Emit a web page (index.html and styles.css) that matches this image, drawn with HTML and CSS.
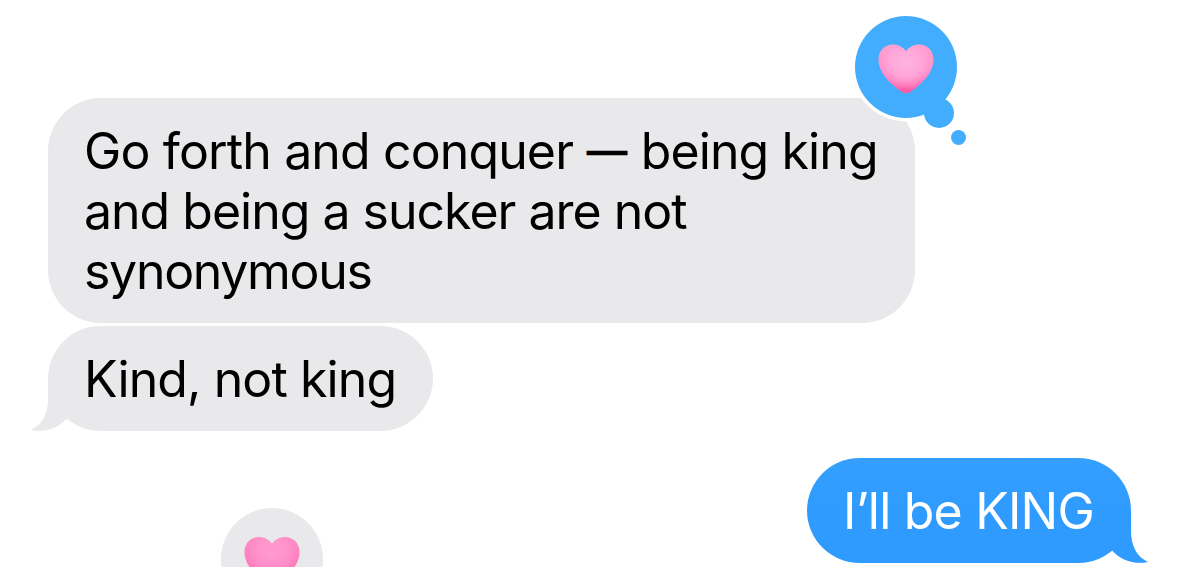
FILE: index.html
```html
<!DOCTYPE html>
<html lang="en">
<head>
<meta charset="utf-8">
<title>Messages</title>
<link rel="stylesheet" href="styles.css">
</head>
<body>
<svg class="defs" aria-hidden="true">
  <defs>
    <linearGradient id="heart-fill" x1="0" y1="0" x2="0" y2="1">
      <stop offset="0" stop-color="#ff9fce"/>
      <stop offset=".5" stop-color="#ff8dc8"/>
      <stop offset=".8" stop-color="#ff72b6"/>
      <stop offset="1" stop-color="#ff559f"/>
    </linearGradient>
    <linearGradient id="heart-fill-deep" x1="0" y1="0" x2="0" y2="1">
      <stop offset="0" stop-color="#ff8cc4"/>
      <stop offset=".6" stop-color="#ff74b9"/>
      <stop offset="1" stop-color="#ff559f"/>
    </linearGradient>
    <radialGradient id="heart-glow" cx=".5" cy=".38" r=".54">
      <stop offset="0" stop-color="#ffb4e0"/>
      <stop offset=".55" stop-color="#ffaadb" stop-opacity=".85"/>
      <stop offset="1" stop-color="#ff9fd4" stop-opacity="0"/>
    </radialGradient>
    <path id="heart" d="M28 7.300C25 3.200 20.500.400 15 .400C6.500.400.500 6.800.500 15.500C.500 28 11 39.500 24 48C27 49.900 29 49.900 32 48C45 39.500 55.500 28 55.500 15.500C55.500 6.800 49.500.400 41 .400C35.500.400 31 3.200 28 7.300Z"/>
  </defs>
</svg>
<main class="thread">
  <section class="message received">
    <p class="bubble long">
      <span class="line l1">Go forth and conquer <span class="dash">—</span> being king</span>
      <span class="line l2">and being a sucker are not</span>
      <span class="line l3">synonymous</span>
    </p>
    <svg class="tapback" width="120" height="140" viewBox="0 0 120 140" role="img" aria-label="Heart">
      <circle cx="58" cy="58" r="54.500" fill="#fff"/>
      <g fill="#42adfc">
        <circle cx="58" cy="58" r="51"/>
        <circle cx="91" cy="104" r="15"/>
        <circle cx="110.500" cy="128.500" r="7.500"/>
      </g>
      <g transform="translate(30 35)">
        <use href="#heart" fill="url(#heart-fill)"/>
        <use href="#heart" fill="url(#heart-glow)"/>
      </g>
    </svg>
  </section>
  <section class="message received">
    <p class="bubble short"><span class="line l4">Kind, not king</span></p>
    <svg class="tail left" width="46" height="54" viewBox="0 0 46 54"><path d="M17 0V22C17 37 11 48 0 53C14 56 27 51 35.500 42L46 24V0Z"/></svg>
  </section>
  <section class="message sent">
    <p class="bubble short"><span class="line l5">I’ll be KING</span></p>
    <svg class="tail right" width="46" height="54" viewBox="0 0 46 54"><path d="M29 0V22C29 37 35 48 46 53C32 56 19 51 10.500 42L0 24V0Z"/></svg>
    <svg class="tapback-next" width="102" height="59" viewBox="0 0 102 59" role="img" aria-label="Heart">
      <circle cx="51" cy="51" r="51" fill="#e9e9eb"/>
      <g transform="translate(23 28.500)">
        <use href="#heart" fill="url(#heart-fill-deep)"/>
        <use href="#heart" fill="url(#heart-glow)" opacity=".5"/>
      </g>
    </svg>
  </section>
</main>
</body>
</html>
```

FILE: styles.css
```css
html, body {
  margin: 0;
  background: #fff;
}

.defs {
  position: absolute;
  width: 0;
  height: 0;
}

.thread {
  box-sizing: border-box;
  width: 1179px;
  height: 567px;
  padding: 98px 48px 0;
  display: flex;
  flex-direction: column;
  gap: 3px;
  overflow: hidden;
  font: 400 50px/60px Inter, "Liberation Sans", sans-serif;
}

.message {
  position: relative;
  display: flex;
}

.bubble {
  box-sizing: border-box;
  margin: 0;
  border-radius: 53px;
  padding: 23px 36px 22px;
}

.received .bubble {
  background: #e9e9eb;
  color: #000;
}

.long {
  width: 867px;
  height: 225px;
}

.short {
  width: 385px;
  height: 105px;
}

.sent {
  justify-content: flex-end;
  margin-top: 24px;
}

.sent .bubble {
  width: 324px;
  background: linear-gradient(#349ffd, #2f9bfe 50%);
  color: #fff;
}

.line {
  display: block;
  white-space: nowrap;
}

.l1 { letter-spacing: -0.87px; }
.l2 { letter-spacing: -1px; }
.l3 { letter-spacing: -1.3px; }
.l4 { letter-spacing: -0.9px; }
.l5 { letter-spacing: -0.8px; }

.dash {
  display: inline-block;
  margin: 0 -4px;
  transform: scaleX(.81);
  -webkit-text-stroke: 0.5px #000;
}

.tapback {
  position: absolute;
  left: 800px;
  top: -89px;
}

.tapback-next {
  position: absolute;
  left: 173px;
  top: 50px;
}

.tail {
  position: absolute;
  bottom: 0;
}

.left {
  left: -17px;
  fill: #e9e9eb;
}

.right {
  right: -17px;
  fill: #2f9bfe;
}
```
